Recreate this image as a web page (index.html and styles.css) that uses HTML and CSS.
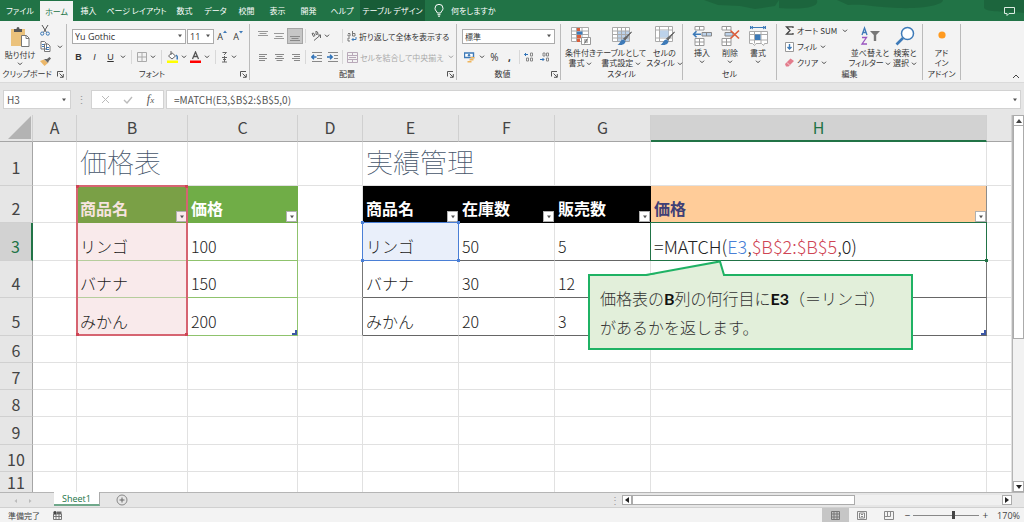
FILE: index.html
```html
<!DOCTYPE html>
<html lang="ja">
<head>
<meta charset="utf-8">
<title>MATCH関数 - 価格表</title>
<link rel="stylesheet" href="styles.css">
</head>
<body>
<svg class="defs" aria-hidden="true">
  <symbol id="caret" viewBox="0 0 6 4"><path d="M1 .7 3 2.7 5 .7" fill="none" stroke="#444" stroke-width="1"/></symbol>
  <symbol id="tri" viewBox="0 0 6 4"><path d="M1 .5h4L3 3.2z" fill="#555"/></symbol>
  <symbol id="launch" viewBox="0 0 7 7"><path d="M.5 5.500V.5H6M2.500 2.500 6 6M6.300 3v3.300H3" fill="none" stroke="#555" stroke-width="1"/></symbol>
</svg>
<div class="app">
  <nav class="tabs">
    <button class="tab w-file">ファイル</button>
    <button class="tab w-home active">ホーム</button>
    <button class="tab">挿入</button>
    <button class="tab w-page">ページ レイアウト</button>
    <button class="tab">数式</button>
    <button class="tab">データ</button>
    <button class="tab">校閲</button>
    <button class="tab">表示</button>
    <button class="tab">開発</button>
    <button class="tab w-help">ヘルプ</button>
    <button class="tab w-design context">テーブル デザイン</button>
    <button class="tell">
      <svg width="10" height="13" viewBox="0 0 10 13"><path d="M3.300 9C3.300 7.500 1 6.800 1 4.300a4 4 0 0 1 8 0C9 6.800 6.700 7.500 6.700 9zM3.500 10.700h3M4 12.200h2" fill="none" stroke="#fff"/></svg>
      何をしますか
    </button>
    <svg class="wave" viewBox="0 0 320 21" preserveAspectRatio="none"><path d="M0 0h75l-4 6-20 3-15-3-22-1zM75 0h38c2 6-8 10-38 8zM133 0h106c0 5-20 9-45 8-30-1-30-4-50-3zM280 0h40v13c-15-2-36 0-40-5z" fill="#1b5f39" opacity=".7"/></svg>
    <button class="comment" aria-label="コメント"><svg width="11" height="10" viewBox="0 0 11 10"><path d="M.5 1.500h10v6H5l-2 2v-2H.5z" fill="none" stroke="#dcebe2"/></svg></button>
  </nav>

  <div class="ribbon">
    <section class="group g-clip">
      <div class="body">
        <button class="big">
          <svg width="20" height="22" viewBox="0 0 20 22"><path d="M1 3h14v17H1z" fill="#ebc27c"/><path d="M4 3h2.500a1.500 2 0 0 1 3 0H12v3H4z" fill="#555"/><path d="M11.500 9.500h5l2.500 2.500v8.500h-7.500z" fill="#fff" stroke="#777"/><path d="M16 9.500V12.500h3" fill="none" stroke="#777"/></svg>
          <span>貼り付け</span><svg class="cr"><use href="#caret"/></svg>
        </button>
        <div class="stack">
          <button aria-label="切り取り"><svg width="10" height="11" viewBox="0 0 10 11"><path d="M2 0l4.500 7.500M8 0 3.500 7.500" stroke="#555" fill="none"/><circle cx="2.200" cy="8.600" r="1.600" fill="none" stroke="#3d7ab8"/><circle cx="7.800" cy="8.600" r="1.600" fill="none" stroke="#3d7ab8"/></svg></button>
          <button aria-label="コピー"><svg width="11" height="11" viewBox="0 0 11 11"><path d="M1 .5h3.500l2 2V8H1zM4.500 3H8l2 2v5.500H4.500z" fill="#fff" stroke="#777"/><path d="M2 3.500h2M2 5.500h2M6 6.500h3M6 8.500h3" stroke="#3d7ab8"/></svg><svg class="cr"><use href="#caret"/></svg></button>
          <button aria-label="書式のコピー"><svg width="11" height="9" viewBox="0 0 11 9"><path d="M0 4l4-1.500L8 6 4.500 9z" fill="#ebb76a"/><path d="M4 2l3 0L9.500 0 11 1.500 8.800 4 8 6z" fill="#666"/></svg></button>
        </div>
      </div>
      <footer><span>クリップボード</span><button class="launch" aria-label="詳細"><svg><use href="#launch"/></svg></button></footer>
    </section>

    <section class="group g-font">
      <div class="body rows">
        <div class="row">
          <label class="box fname"><input value="Yu Gothic" aria-label="フォント"><svg class="cr"><use href="#tri"/></svg></label><label class="box fsize"><input value="11" aria-label="サイズ"><svg class="cr"><use href="#tri"/></svg></label>
          <button class="sz first">A<svg width="4" height="4" viewBox="0 0 4 4"><path d="M0 3 2 .5 4 3z" fill="#3d7ab8"/></svg></button>
          <button class="sz">A<svg width="4" height="4" viewBox="0 0 4 4"><path d="M0 1h4L2 3.500z" fill="#3d7ab8"/></svg></button>
        </div>
        <div class="row tools">
          <button class="ch"><b>B</b></button><button class="ch"><i>I</i></button><button class="ch"><u>U</u></button><svg class="cr"><use href="#caret"/></svg>
          <span class="sep"></span>
          <button aria-label="罫線"><svg width="10" height="10" viewBox="0 0 10 10"><path d="M.5.5h9v9h-9zM5 .5v9M.5 5h9" fill="none" stroke="#aaa"/></svg></button><svg class="cr"><use href="#caret"/></svg>
          <span class="sep"></span>
          <button aria-label="塗りつぶし"><svg width="11" height="12" viewBox="0 0 11 12"><path d="M1.500 5 5 1.800 8.500 5 5 8z" fill="#fff" stroke="#666"/><path d="M4 0v4" stroke="#666"/><path d="M9 4c1.500 1 1.500 3 1 4.500" stroke="#3d7ab8" stroke-width="1.500" fill="none"/><path d="M0 9.500h11V12H0z" fill="#ff0"/></svg></button><svg class="cr"><use href="#caret"/></svg>
          <button aria-label="文字の色"><svg width="11" height="12" viewBox="0 0 11 12"><path d="M2.500 8 5.500 1 8.500 8M3.500 5.500h4" fill="none" stroke="#555" stroke-width="1.300"/><path d="M0 9.500h11V12H0z" fill="#f00"/></svg></button><svg class="cr"><use href="#caret"/></svg>
          <span class="sep"></span>
          <button aria-label="ふりがな"><svg width="7" height="12" viewBox="0 0 7 12"><path d="M1.500 1.500h4L3 4M1 6.500h5M2 8.500h3M1 11h5M3.500 5v6" fill="none" stroke="#666"/></svg></button><svg class="cr"><use href="#caret"/></svg>
        </div>
      </div>
      <footer><span>フォント</span><button class="launch" aria-label="詳細"><svg><use href="#launch"/></svg></button></footer>
    </section>

    <section class="group g-align">
      <div class="body rows">
        <div class="row">
          <button class="al" aria-label="上揃え"><svg width="10" height="10" viewBox="0 0 10 10"><path d="M0 .5h10M1.500 2.500h7M0 4.500h10" stroke="#999"/></svg></button>
          <button class="al" aria-label="上下中央揃え"><svg width="10" height="10" viewBox="0 0 10 10"><path d="M0 2.500h10M1.500 5.500h7M0 7.500h10" stroke="#999"/></svg></button>
          <button class="al on" aria-label="下揃え"><svg width="10" height="10" viewBox="0 0 10 10"><path d="M0 5.500h10M1.500 7.500h7M0 9.500h10" stroke="#888"/></svg></button>
          <span class="sep"></span>
          <button class="al" aria-label="方向"><svg width="11" height="10" viewBox="0 0 11 10"><path d="M3 9.500 9.500 4M9.500 4v3M9.500 4H7M1 2.500l1.500 3L4 4.500 2.500 2zM5 0v3.500l2-.5-.5-2z" fill="none" stroke="#666"/></svg></button><svg class="cr"><use href="#caret"/></svg>
          <span class="sep gap"></span>
          <button class="wrap"><svg width="10" height="11" viewBox="0 0 10 11"><path d="M1 2.500h2V5H1V3.500M5.500 0v5h2.500V2.500H5.500M3 7H1v3h2" fill="none" stroke="#777"/><path d="M9 6v2.500H5M6.500 7 5 8.500 6.500 10" fill="none" stroke="#3d7ab8"/></svg>折り返して全体を表示する</button>
        </div>
        <div class="row">
          <button class="al" aria-label="左揃え"><svg width="9" height="9" viewBox="0 0 9 9"><path d="M0 1.500h8M0 3.500h6M0 5.500h8M0 7.500h6" stroke="#888"/></svg></button>
          <button class="al" aria-label="中央揃え"><svg width="9" height="9" viewBox="0 0 9 9"><path d="M0 1.500h9M1.500 3.500h6M0 5.500h9M1.500 7.500h6" stroke="#888"/></svg></button>
          <button class="al" aria-label="右揃え"><svg width="9" height="9" viewBox="0 0 9 9"><path d="M1 1.500h8M3 3.500h6M1 5.500h8M3 7.500h6" stroke="#888"/></svg></button>
          <span class="sep"></span>
          <button class="al" aria-label="インデントを減らす"><svg width="11" height="10" viewBox="0 0 11 10"><path d="M1 .5h10M6 3.500h5M6 6.500h5M1 9.500h10" stroke="#888"/><path d="M5.500 5H1M3 2.800.800 5 3 7.200" fill="none" stroke="#2f72b8" stroke-width="1.500"/></svg></button>
          <button class="al" aria-label="インデントを増やす"><svg width="11" height="10" viewBox="0 0 11 10"><path d="M1 .5h10M7 3.500h4M7 6.500h4M1 9.500h10" stroke="#888"/><path d="M0 5h5M3 2.800 5.200 5 3 7.200" fill="none" stroke="#2f72b8" stroke-width="1.500"/></svg></button>
          <span class="sep"></span>
          <button class="wrap off"><svg width="11" height="11" viewBox="0 0 11 11"><path d="M.5.5h10v10H.5zM.5 3.500h10M.5 7.500h10M5.500.5v3M5.500 7.500v3M2 5.500h7" fill="none" stroke="#b9a9b9"/></svg>セルを結合して中央揃え</button><svg class="cr off"><use href="#caret"/></svg>
        </div>
      </div>
      <footer><span>配置</span><button class="launch" aria-label="詳細"><svg><use href="#launch"/></svg></button></footer>
    </section>

    <section class="group g-num">
      <div class="body rows">
        <div class="row"><label class="box fnum"><input value="標準" aria-label="表示形式"><svg class="cr"><use href="#tri"/></svg></label></div>
        <div class="row num">
          <button aria-label="通貨"><svg width="11" height="11" viewBox="0 0 11 11"><path d="M.5 1h9v4.500h-9z" fill="#fff" stroke="#3d7ab8" stroke-width="1.400"/><circle cx="5" cy="3.200" r="1.200" fill="#3d7ab8"/><path d="M6.500 5h4v1.500h-4zM5.500 7h4v1.500h-4zM3.500 9h4v1.500h-4z" fill="#f0b55c"/></svg></button><svg class="cr"><use href="#caret"/></svg>
          <button class="pct">%</button><button class="pct"><b>,</b></button><span class="sep"></span>
          <button aria-label="小数点以下の表示桁数を増やす"><svg width="10" height="10" viewBox="0 0 10 10"><path d="M4 2.500H.5M2 1 .5 2.500 2 4" fill="none" stroke="#2f72b8"/><path d="M6.500 1h2v3h-2zM2.500 6h2v3h-2zM6.500 6h2v3h-2z" fill="none" stroke="#888"/></svg></button>
          <button class="dec" aria-label="小数点以下の表示桁数を減らす"><svg width="10" height="10" viewBox="0 0 10 10"><path d="M0 7.500h4M2.500 6 4 7.500 2.500 9" fill="none" stroke="#2f72b8"/><path d="M3 1h2v3H3zM6.500 1h2v3h-2zM6.500 6h2v3h-2z" fill="none" stroke="#888"/></svg></button>
        </div>
      </div>
      <footer><span>数値</span><button class="launch" aria-label="詳細"><svg><use href="#launch"/></svg></button></footer>
    </section>

    <section class="group g-style">
      <div class="body">
        <button class="big"><svg width="21" height="20" viewBox="0 0 21 20"><path d="M1.500 1.500h17v14h-17zM1.500 5h17M1.500 8.500h17M1.500 12h17M6.500 1.500v14M12 1.500v14" fill="#fff" stroke="#aaa"/><path d="M7 2h3v3H7zM7 9h4v3H7z" fill="#d95f3c"/><path d="M7 5.500h5.500v3H7z" fill="#3d7ab8"/><path d="M7 12.500h3V16H7z" fill="#d95f3c"/><path d="M11.500 11.500h9v7h-9z" fill="#fff" stroke="#999"/><path d="M14 14h4M14 16h4M17.500 12.500l-3 5" stroke="#555" stroke-width=".8"/></svg><span>条件付き<br>書式 <svg class="cr"><use href="#caret"/></svg></span></button>
        <button class="big"><svg width="21" height="20" viewBox="0 0 21 20"><path d="M1.500 1.500h17v14h-17z" fill="#fff"/><path d="M6.500 5h12v10.500h-12z" fill="#bcd2ea"/><path d="M1.500 1.500h17v14h-17zM1.500 5h17M1.500 8.500h17M1.500 12h17M6.500 1.500v14M10.500 1.500v14M14.500 1.500v14" fill="none" stroke="#aaa"/><path d="M20.500 6 14 14l-1.500-1.200z" fill="#666" stroke="#666"/><path d="M12.500 13.500c-3 0-3 3.500-6 5.500 4 .5 8-.5 8-4z" fill="#3d7ab8"/></svg><span>テーブルとして<br>書式設定 <svg class="cr"><use href="#caret"/></svg></span></button>
        <button class="big"><svg width="21" height="20" viewBox="0 0 21 20"><path d="M1.500.5h17v15h-17zM1.500 4h17M1.500 12h17M5.500.5v15M14.500.5v15" fill="#fff" stroke="#aaa"/><path d="M6 4.500h8.500v7H6z" fill="#bcd2ea"/><path d="M20.500 6 14 14l-1.500-1.200z" fill="#666" stroke="#666"/><path d="M12.500 13.500c-3 0-3 3.500-6 5.500 4 .5 8-.5 8-4z" fill="#3d7ab8"/></svg><span>セルの<br>スタイル <svg class="cr"><use href="#caret"/></svg></span></button>
      </div>
      <footer><span>スタイル</span></footer>
    </section>

    <section class="group g-cell">
      <div class="body">
        <button class="big w28"><svg width="20" height="20" viewBox="0 0 20 20"><path d="M3 .5h9v3.500H3zM7.500.5V4M3 12.500h9v7H3zM3 16h9M7.500 12.500v7" fill="#fff" stroke="#999"/><path d="M10 6.500h9.500v3.500H10zM14.500 6.500V10" fill="#bcd2ea" stroke="#888"/><path d="M9 8.300H1.500M4.500 5.300 1.500 8.300l3 3" fill="none" stroke="#3d7ab8" stroke-width="1.600"/></svg><span>挿入</span><svg class="cr"><use href="#caret"/></svg></button>
        <button class="big w28"><svg width="20" height="20" viewBox="0 0 20 20"><path d="M2 .5h9v3.500H2zM6.500.5V4M2 12.500h9v7H2zM2 16h9M6.500 12.500v7" fill="#fff" stroke="#999"/><path d="M5 6.500h8V10H5z" fill="#bcd2ea" stroke="#888"/><path d="M10.500 4.500l8.500 8M19 4.500l-8.500 8" stroke="#dc5c3b" stroke-width="1.700"/></svg><span>削除</span><svg class="cr"><use href="#caret"/></svg></button>
        <button class="big w28"><svg width="20" height="20" viewBox="0 0 20 20"><path d="M3 1.500h14M5 0 3 1.500 5 3M15 0l2 1.500L15 3M2.500 0v3M17.500 0v3" fill="none" stroke="#3d7ab8"/><path d="M1.500 5.500h18v12h-3l-1 2-2-2H8l-1.500 2-2-2h-3zM1.500 8.500h18M1.500 14h18M6.500 5.500v12M13 5.500v12" fill="#fff" stroke="#aaa"/><path d="M7 8.500h5.500v5.500H7z" fill="#3d7ab8"/></svg><span>書式</span><svg class="cr"><use href="#caret"/></svg></button>
      </div>
      <footer><span>セル</span></footer>
    </section>

    <section class="group g-edit">
      <div class="body">
        <div class="list">
          <button><svg width="9" height="9" viewBox="0 0 9 9"><path d="M8 2V.8H1.500L5 4.500 1.500 8.200H8V7" fill="none" stroke="#444" stroke-width="1.300"/></svg>オート SUM <svg class="cr far"><use href="#caret"/></svg></button>
          <button><svg width="9" height="10" viewBox="0 0 9 10"><path d="M.5.5h8v9h-8z" fill="#fff" stroke="#999"/><path d="M4.500 2v5M2.500 5l2 2 2-2" fill="none" stroke="#3d7ab8" stroke-width="1.400"/></svg>フィル <svg class="cr"><use href="#caret"/></svg></button>
          <button><svg width="9" height="9" viewBox="0 0 9 9"><path d="M0 6 5.500.5 9 3 3.500 8.500H1z" fill="#e37c8c"/><path d="M2 4.500l3 3" stroke="#f7d3d8"/></svg>クリア <svg class="cr"><use href="#caret"/></svg></button>
        </div>
        <button class="big w38"><svg width="20" height="20" viewBox="0 0 20 20"><path d="M2 9 4.500 2 7 9M2.800 6.500h3.400" fill="none" stroke="#3d7ab8" stroke-width="1.300"/><path d="M2 11.500h4.500L2 18h5" fill="none" stroke="#9a55c0" stroke-width="1.300"/><path d="M10 5h10l-3.800 4v6h-2.400V9z" fill="#777"/></svg><span>並べ替えと<br>フィルター <svg class="cr"><use href="#caret"/></svg></span></button>
        <button class="big w32"><svg width="20" height="20" viewBox="0 0 20 20"><circle cx="12.500" cy="7.500" r="6" fill="#fff" stroke="#3d7ab8" stroke-width="1.500"/><path d="M8 12 1.500 18.500" stroke="#3d7ab8" stroke-width="2.600"/></svg><span>検索と<br>選択 <svg class="cr"><use href="#caret"/></svg></span></button>
      </div>
      <footer><span>編集</span></footer>
    </section>

    <section class="group g-add">
      <div class="body"><button class="big"><svg width="20" height="20" viewBox="0 0 20 20"><circle cx="10" cy="9" r="3.600" fill="#ff9a1f"/></svg><span>アド<br>イン</span></button></div>
      <footer><span>アドイン</span></footer>
    </section>
    <button class="collapse" aria-label="リボンを折りたたむ"><svg width="8" height="5" viewBox="0 0 8 5"><path d="M1 4 4 1l3 3" fill="none" stroke="#444"/></svg></button>
  </div>

  <div class="formula">
    <label class="namebox"><input value="H3" aria-label="名前ボックス"><svg class="cr"><use href="#tri"/></svg></label>
    <span class="grip">⋮</span>
    <div class="fx">
      <button aria-label="キャンセル"><svg width="9" height="9" viewBox="0 0 9 9"><path d="M1 1l7 7M8 1 1 8" stroke="#bbb"/></svg></button>
      <button aria-label="入力"><svg width="10" height="8" viewBox="0 0 10 8"><path d="M1 4l3 3 5-6" fill="none" stroke="#bbb" stroke-width="1.400"/></svg></button>
      <button class="fn"><i>f<small>x</small></i></button>
    </div>
    <label class="fbox"><input value="=MATCH(E3,$B$2:$B$5,0)" aria-label="数式バー"><svg class="cr"><use href="#tri"/></svg></label>
  </div>

  <main class="sheet">
    <div class="grid">
      <table>
        <colgroup><col class="c-h"><col class="c-a"><col class="c-b"><col class="c-b"><col class="c-d"><col class="c-e"><col class="c-e"><col class="c-e"><col class="c-w"><col></colgroup>
        <thead><tr><th class="corner"><svg width="23" height="23" viewBox="0 0 23 23"><path d="M23 0v23H0z" fill="#b3b3b3"/></svg></th><th>A</th><th>B</th><th>C</th><th>D</th><th>E</th><th>F</th><th>G</th><th class="sel">H</th><th></th></tr></thead>
        <tbody>
          <tr class="r1"><th>1</th><td></td><td class="ttl">価格表</td><td></td><td></td><td class="ttl" colspan="2">実績管理</td><td></td><td></td><td></td></tr>
          <tr class="r2"><th>2</th><td></td><td class="hd olive">商品名<button class="flt pink" aria-label="フィルター"><svg class="cr"><use href="#tri"/></svg></button><span class="range red"><i></i><i></i><i></i><i></i></span></td><td class="hd green">価格<button class="flt" aria-label="フィルター"><svg class="cr"><use href="#tri"/></svg></button></td><td></td><td class="hd black">商品名<button class="flt" aria-label="フィルター"><svg class="cr"><use href="#tri"/></svg></button></td><td class="hd black">在庫数<button class="flt" aria-label="フィルター"><svg class="cr"><use href="#tri"/></svg></button></td><td class="hd black">販売数<button class="flt" aria-label="フィルター"><svg class="cr"><use href="#tri"/></svg></button></td><td class="hd orange">価格<button class="flt" aria-label="フィルター"><svg class="cr"><use href="#tri"/></svg></button></td><td></td></tr>
          <tr class="r3"><th class="sel">3</th><td></td><td class="pk">リンゴ</td><td class="gl">100</td><td class="pre"></td><td class="kl blue">リンゴ<span class="range bl"><i></i><i></i><i></i><i></i></span></td><td class="kl">50</td><td class="kl">5</td><td class="kl edit">=MATCH(<span class="t-blue">E3</span>,<span class="t-red">$B$2:$B$5</span>,0)<span class="range gr"><i></i></span>
            <aside class="callout"><svg width="84" height="18" viewBox="0 0 84 18"><path d="M3 16 78 2l5 14v2H3z" fill="#e2efda"/><path d="M0 15h4L78 1.500l4 13.500h2" fill="none" stroke="#1fb264" stroke-width="2"/></svg>価格表の<b>B</b>列の何行目に<b>E3</b>（＝リンゴ）<br>があるかを返します。</aside></td><td></td></tr>
          <tr class="r4"><th>4</th><td></td><td class="pk">バナナ</td><td class="gl">150</td><td class="pre"></td><td class="kl">バナナ</td><td class="kl">30</td><td class="kl">12</td><td class="kl end"></td><td></td></tr>
          <tr class="r5"><th>5</th><td></td><td class="pk">みかん</td><td class="gl last">200</td><td class="pre"></td><td class="kl">みかん</td><td class="kl">20</td><td class="kl">3</td><td class="kl end last"></td><td></td></tr>
          <tr><th>6</th><td></td><td></td><td></td><td></td><td></td><td></td><td></td><td></td><td></td></tr>
          <tr><th>7</th><td></td><td></td><td></td><td></td><td></td><td></td><td></td><td></td><td></td></tr>
          <tr><th>8</th><td></td><td></td><td></td><td></td><td></td><td></td><td></td><td></td><td></td></tr>
          <tr class="tall"><th>9</th><td></td><td></td><td></td><td></td><td></td><td></td><td></td><td></td><td></td></tr>
          <tr><th>10</th><td></td><td></td><td></td><td></td><td></td><td></td><td></td><td></td><td></td></tr>
          <tr class="r11"><th>11</th><td></td><td></td><td></td><td></td><td></td><td></td><td></td><td></td><td></td></tr>
        </tbody>
      </table>
    </div>
    <div class="vscroll">
      <button aria-label="上へ"><svg width="6" height="4" viewBox="0 0 6 4"><path d="M0 4 3 0l3 4z" fill="#444"/></svg></button>
      <div class="vthumb"></div><div class="vtrack"></div>
      <button aria-label="下へ"><svg width="6" height="4" viewBox="0 0 6 4"><path d="M0 0h6L3 4z" fill="#222"/></svg></button>
    </div>
  </main>

  <div class="sheets">
    <div class="nav"><svg width="18" height="6" viewBox="0 0 18 6"><path d="M3 1v4L.5 3zM15 1v4l2.500-2z" fill="#bbb"/></svg></div>
    <button class="stab">Sheet1</button>
    <button class="plus" aria-label="新しいシート"><svg width="12" height="12" viewBox="0 0 12 12"><circle cx="6" cy="6" r="5" fill="none" stroke="#888"/><path d="M3.500 6h5M6 3.500v5" stroke="#666"/></svg></button>
    <span class="dots">⋮</span>
    <div class="hscroll">
      <button aria-label="左へ"><svg width="4" height="6" viewBox="0 0 4 6"><path d="M4 0v6L0 3z" fill="#222"/></svg></button>
      <div class="hthumb"></div><div class="htrack"></div>
      <button aria-label="右へ"><svg width="4" height="6" viewBox="0 0 4 6"><path d="M0 0v6l4-3z" fill="#222"/></svg></button>
    </div>
  </div>

  <footer class="status">
    <span>準備完了</span>
    <svg width="9" height="9" viewBox="0 0 9 9"><path d="M.5 3h8v5.500h-8zM.5 5.500h8M3 3v5.500M6 3v5.500" fill="none" stroke="#777"/><circle cx="2" cy="1.800" r="1.700" fill="#444"/><path d="M4 .5h4.500V3H4z" fill="#666"/></svg>
    <div class="views">
      <button class="on" aria-label="標準"><svg width="9" height="9" viewBox="0 0 9 9"><path d="M.5.5h8v8h-8zM.5 3h8M.5 6h8M3 .5v8M6 .5v8" fill="none" stroke="#777"/></svg></button>
      <button aria-label="ページ レイアウト"><svg width="10" height="9" viewBox="0 0 10 9"><path d="M.5.5h9v8h-9zM2.500 2h5v5h-5zM4 3.500h2M4 5.500h2" fill="none" stroke="#888"/></svg></button>
      <button aria-label="改ページ プレビュー"><svg width="10" height="9" viewBox="0 0 10 9"><path d="M.5.5h9v8h-9zM3.500.5v5M6.500.5v5H.5" fill="none" stroke="#888"/></svg></button>
    </div>
    <div class="zoombar">
      <button class="zb">−</button>
      <input class="zoom" type="range" min="0" max="100" value="62" aria-label="ズーム">
      <button class="zb">+</button>
      <span class="pc">170%</span>
    </div>
  </footer>
</div>
</body>
</html>
```
FILE: styles.css
```css
* { box-sizing: border-box; }
html, body { margin: 0; height: 100%; }
body { font-family: "Noto Sans CJK JP", sans-serif; font-size: 8px; color: #333; background: #e6e6e6; font-feature-settings: "palt"; }
button { font: inherit; color: inherit; background: none; border: 0; padding: 0; margin: 0; display: flex; align-items: center; justify-content: center; font-feature-settings: inherit; white-space: nowrap; }
input { font: inherit; color: inherit; border: 0; padding: 0; margin: 0; background: none; min-width: 0; flex: 1; outline: 0; }
svg { flex: none; display: block; }
.defs { position: absolute; width: 0; height: 0; }
.cr { width: 6px; height: 4px; display: inline-block; vertical-align: middle; }
.app { height: 100vh; display: flex; flex-direction: column; overflow: hidden; }

.tabs { height: 21px; flex: none; background: #217346; color: #fff; display: flex; position: relative; }
.tab { width: 31px; }
.w-file { width: 40px; }
.w-home { width: 33px; }
.w-page { width: 65px; }
.w-help { width: 36px; }
.w-design { width: 65px; }
.active { background: #f3f3f3; color: #217346; border-top: 1px solid #217346; }
.context { background: #185c37; }
.tell { gap: 7px; padding-left: 9px; }
.wave { position: absolute; right: 0; top: 0; width: 320px; height: 21px; }
.comment { margin-left: auto; padding-right: 9px; position: relative; }

.ribbon { height: 62px; flex: none; background: #f3f3f3; display: flex; padding: 3px 0 2px; border-bottom: 1px solid #dadada; }
.group { display: flex; flex-direction: column; border-right: 1px solid #bbb; flex: none; }
.body { flex: 1; display: flex; min-height: 0; }
.group > footer { height: 12px; display: flex; align-items: center; justify-content: center; line-height: 12px; position: relative; }
.g-clip > footer, .g-font > footer, .g-align > footer, .g-num > footer { padding-right: 12px; }
.launch { position: absolute; right: 2px; top: 3px; }
.launch svg { width: 7px; height: 7px; }
.g-clip { width: 67px; }
.g-font { width: 183px; }
.g-align { width: 207px; }
.g-num { width: 104px; }
.g-style { width: 122px; }
.g-cell { width: 94px; }
.g-edit { width: 146px; }
.g-add { width: 38px; }
.g-clip .big { width: 40px; }
.big { flex-direction: column; justify-content: flex-start; line-height: 10px; padding-top: 2px; height: 44px; }
.big > svg:first-child { margin-bottom: 2px; }
.big > .cr { margin-top: 2px; }
.w28 { width: 28px; }
.w32 { width: 32px; }
.w38 { width: 38px; }
.g-style .body { justify-content: space-between; padding: 0 2px 0 4px; }
.g-cell .body { padding-left: 5px; }
.g-add .big { width: 100%; }
.stack { display: flex; flex-direction: column; gap: 5px; align-items: flex-start; padding: 1px 0 0 -2px; }
.g-clip .big + .stack { padding-top: 1px; }
.stack button { gap: 6px; }
.rows { flex-direction: column; gap: 5px; padding: 4px 0 0 5px; }
.row { display: flex; align-items: center; height: 16px; }
.box { display: flex; align-items: center; height: 15px; background: #fff; border: 1px solid #ababab; padding: 0 2px; }
.fname { width: 114px; font: 9px "Open Sans", sans-serif; }
.fsize { width: 27px; font: 9px "Open Sans", sans-serif; margin-left: 1px; }
.fnum { width: 93px; }
.sz { font: 9px "Open Sans", sans-serif; width: 16px; align-items: flex-start; }
.tools { gap: 3px; }
.tools > .sep { margin: 0 2px; }
.ch { width: 13px; font: 9px "Liberation Sans", sans-serif; }
.sep { width: 1px; height: 14px; background: #d8d8d8; margin: 0 2px; }
.al { width: 16px; height: 16px; }
.al.on { background: #c6c6c6; border: 1px solid #a5a5a5; }
.sep.gap { margin-left: 12px; }
.wrap { gap: 2px; margin-left: 2px; }
.off { color: #aaa; }
.cr.off { margin-left: 4px; opacity: .5; }
.num { gap: 4px; padding-left: 2px; }
.num .sep { margin: 0; }
.dec { margin-left: 2px; }
.pct { font: 10px "Open Sans", sans-serif; width: 11px; }
.list { display: flex; flex-direction: column; gap: 5px; width: 74px; padding: 1px 0 0 8px; align-items: flex-start; }
.list button { gap: 3px; height: 11px; }
.far { margin-left: 2px; }
.collapse { margin: auto 4px 1px auto; }

.formula { flex: none; height: 32px; padding: 7px 3px 6px; display: flex; background: #e6e6e6; color: #555; }
.formula input { font: 10px "Noto Sans CJK JP", sans-serif; }
.namebox, .fx, .fbox { background: #fff; border: 1px solid #d2d2d2; display: flex; align-items: center; }
.namebox { width: 68px; padding: 0 3px; }
.grip { width: 20px; text-align: center; line-height: 18px; font-size: 11px; color: #999; }
.fx { width: 73px; justify-content: space-around; padding: 0 2px; }
.fn { font: 12px "Liberation Serif", serif; }
.fn small { font-size: 9px; }
.fbox { flex: 1; margin-left: 2px; padding: 0 2px 0 7px; }

.sheet { flex: 1; display: flex; min-height: 0; border-bottom: 1px solid #b5b5b5; }
.grid { flex: 1; overflow: hidden; background: #fff; border-right: 1px solid #b5b5b5; }
table { width: 100%; table-layout: fixed; border-collapse: separate; border-spacing: 0; font-size: 16px; font-weight: 300; font-feature-settings: normal; }
.c-h { width: 33px; }
.c-a { width: 44px; }
.c-b { width: 111px; }
.c-b + .c-b { width: 110px; }
.c-d { width: 65px; }
.c-e { width: 96px; }
.c-w { width: 336px; }
th, td { padding: 0 0 0 3px; height: 27px; line-height: 24px; border: 0 solid #e1e1e1; border-width: 0 1px 1px 0; vertical-align: bottom; text-align: left; position: relative; white-space: nowrap; color: #222; font-weight: 300; }
th { background: #e6e6e6; text-align: center; padding: 0; border-color: #d0d0d0; font-weight: 400; color: #444; }
thead th { border-bottom-color: #a5a5a5; padding-bottom: 2px; }
tbody th { border-right-color: #a5a5a5; }
.corner svg { margin: 0 0 0 8px; }
th.sel { background: #d2d2d2; color: #217346; }
thead th.sel { border-bottom: 2px solid #217346; padding-bottom: 1px; }
tbody th.sel { border-right: 2px solid #217346; }
.r1 > * { height: 44px; padding-bottom: 6px; }
.r1 > .ttl { font-size: 27px; line-height: 36px; color: #44546a; padding-bottom: 5px; font-weight: 100; }
.r2 > *, .r4 > * { height: 37px; }
.r3 > *, .r5 > * { height: 38px; }
.r2 > *, .r3 > *, .r4 > *, .r5 > * { padding-bottom: 2px; }
.tall > * { height: 28px; }
.r11 > * { vertical-align: top; line-height: 20px; }
td.hd { color: #fff; font-weight: 700; }
.olive { background: #7aa046; border-color: #7aa046; }
td.olive { color: #f6e4df; }
.green { background: #70ad47; border-color: #70ad47; }
.black { background: #000; border-color: #000; }
td.orange { background: #ffcc99; color: #3f3f76; border-color: #8c8c8c; }
td.edit { font-size: 18px; }
.flt { position: absolute; right: 0; bottom: 0; width: 11px; height: 11px; background: #fff; border: 1px solid #b0b0b0; }
.flt.pink { background: #fbeaec; }
.pk { background: #f9eaeb; border-color: #b6cd9c; }
.gl { border-right-color: #8fc36d; border-bottom-color: #8fc36d; }
.kl { border-bottom-color: #666; }
.pre { border-right-color: #777; }
.blue { background: #e9effa; }
.end { border-right-color: #777; }
.last::after { content: ""; position: absolute; right: 0; bottom: 0; width: 5px; height: 5px; background: #3b57a6; clip-path: polygon(100% 0, 100% 100%, 0 100%, 0 60%, 60% 60%, 60% 0); }
.range { position: absolute; left: -1px; top: -1px; right: -1px; pointer-events: none; border: 1px solid; z-index: 1; }
.range i { position: absolute; width: 3px; height: 3px; background: currentColor; }
.range i:nth-child(1) { left: -2px; top: -2px; }
.range i:nth-child(2) { right: -2px; top: -2px; }
.range i:nth-child(3) { left: -2px; bottom: -2px; }
.range i:nth-child(4) { right: -2px; bottom: -2px; }
.range.red { color: #cf4555; height: 151px; border-width: 2px; border-color: #d66471; }
.bl { color: #4a7fd6; bottom: -1px; }
.gr { color: #217346; bottom: -1px; }
.range.gr i { left: auto; top: auto; right: -2px; bottom: -2px; }
.t-blue { color: #4a7fd6; }
.t-red { color: #cf4555; }
.callout { position: absolute; z-index: 2; left: -63px; top: 51px; width: 325px; border: 2px solid #1fb264; background: #e2efda; padding: 8px 10px 7px; line-height: 28px; color: #333; font-size: 16px; }
.callout svg { position: absolute; left: 52px; top: -16px; }
.callout b { font-family: Lato, sans-serif; font-weight: 700; color: #111; }

.vscroll { width: 11px; flex: none; display: flex; flex-direction: column; background: #f2f2f2; }
.vscroll button { height: 11px; background: #fff; border: 1px solid #ababab; flex: none; }
.vthumb { flex: 213; background: #fff; border: 1px solid #ababab; border-top: 0; }
.vtrack { flex: 142; }

.sheets { height: 15px; flex: none; display: flex; align-items: stretch; background: #e6e6e6; border-bottom: 1px solid #d0d0d0; }
.nav { width: 54px; padding: 5px 0 0 14px; }
.stab { width: 46px; height: 14px; background: #fff; color: #217346; border-bottom: 2px solid #6fa88a; font: 9px "Open Sans", sans-serif; margin-top: -1px; border-right: 1px solid #ababab; }
.plus { margin-left: 16px; }
.dots { margin-left: auto; width: 8px; text-align: center; font-size: 10px; line-height: 14px; color: #999; }
.hscroll { display: flex; width: 390px; margin: 2px 12px 2px 4px; background: #f0f0f0; }
.hscroll button { width: 10px; background: #fff; border: 1px solid #ababab; }
.hthumb { flex: 222; background: #fff; border: 1px solid #ababab; }
.htrack { flex: 148; }

.status { height: 14px; flex: none; display: flex; align-items: center; background: #f3f3f3; padding: 0 4px 0 8px; gap: 13px; color: #444; }
.views { margin-left: auto; display: flex; align-self: stretch; }
.views button { width: 27px; }
.views .on { background: #c6c6c6; }
.zoombar { display: flex; align-items: center; gap: 3px; margin-left: -11px; }
.zoombar .pc { font: 9px "Open Sans", sans-serif; margin-left: 6px; }
.zb { font: 10px "Open Sans", sans-serif; }
.zoom { -webkit-appearance: none; appearance: none; flex: none; width: 66px; height: 8px; background: linear-gradient(#888, #888) center / 100% 1px no-repeat; }
.zoom::-webkit-slider-thumb { -webkit-appearance: none; width: 3px; height: 8px; background: #444; }
```
